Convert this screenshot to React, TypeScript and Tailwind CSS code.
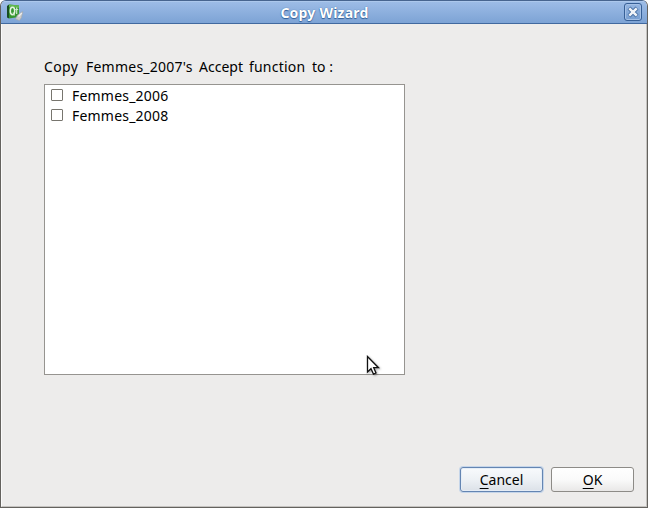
import React from 'react';

function AppIcon() {
  return (
    <svg width="18" height="18" viewBox="0 0 18 18" className="block">
      <path d="M1 2 3 .5V14.5L1 13.5Z" fill="#174d20" />
      <path d="M3 .5 13 1.5V13L3 14.5Z" fill="#35962f" />
      <path d="M3 .5 13 1.5V4L3 3Z" fill="#62b84e" />
      <ellipse cx="6.5" cy="7" rx="2.2" ry="3.7" fill="none" stroke="#e3f3df" strokeWidth="1.5" />
      <path d="M7 8.5 8.5 11.5M10.7 3.5V10M9.2 5.5H12.2" stroke="#d0ebca" strokeWidth="1.2" fill="none" />
      <path d="M16.8 7.5 11.5 11 9.5 15 13.5 16.5 15.5 13.5Z" fill="#c9caca" stroke="#a5a8aa" strokeWidth=".6" />
      <path d="M15.8 9 12.5 12.5" stroke="#eeeeee" strokeWidth="1.2" />
    </svg>
  );
}

function TitleBar() {
  return (
    <header className="flex h-[23px] shrink-0 items-start justify-between border-b border-[#41699f] bg-linear-to-b from-[#9ebde7] to-[#7da3d5] pr-[5px] pl-[5px] pt-[2px] shadow-[inset_0_1px_0_#acc8ec]">
      <div className="w-[19px] pt-px"><AppIcon /></div>
      <h1 className="mt-px whitespace-nowrap text-[14px] leading-[18px] font-bold tracking-[0.22px] text-white [text-shadow:0_0_1px_#315f98,0_1px_1px_#315f98]">Copy Wizard</h1>
      <button aria-label="Close" className="flex h-[18px] w-[18px] items-center justify-center rounded-[3px] border border-[#365f96] bg-linear-to-b from-[#94b5e1] to-[#789fd1] shadow-[inset_0_0_0_1px_#a5c1e6]">
        <svg width="12" height="12" viewBox="0 0 12 12">
          <path d="M2 2 10 10M10 2 2 10" stroke="#426b9f" strokeWidth="4.2" />
          <path d="M2.3 2.3 9.7 9.7M9.7 2.3 2.3 9.7" stroke="#f1f4f8" strokeWidth="2.5" />
        </svg>
      </button>
    </header>
  );
}

function CheckRow({ label }: { label: string }) {
  return (
    <label className="flex h-5 items-center">
      <span className="mb-[2px] h-3 w-3 rounded-[1px] border border-[#77756e] bg-white" />
      <span className="ml-[9px] text-[14px] leading-5 tracking-[0.2px]">{label}</span>
    </label>
  );
}

function Pointer() {
  return (
    <svg width="16" height="22" viewBox="0 0 16 22" className="absolute left-[321px] top-[270px] drop-shadow-[1px_1px_1px_#00000055]">
      <path d="M1.5 1.5V17L5 13.7 7.5 19.2 10 18 7.7 12.7H12.5Z" fill="white" stroke="#111" strokeWidth="1.3" />
    </svg>
  );
}

export default function App() {
  return (
    <div className="h-[508px] w-[648px] bg-white font-['Noto_Sans','Open_Sans',sans-serif] text-black">
      <div className="flex h-full flex-col overflow-hidden rounded-t-[6px] border border-t-[#47658f] border-r-[#64625e] border-b-[#64625e] border-l-[#64625e] bg-[#edeceb]">
        <TitleBar />
        <main className="flex flex-1 flex-col border-r border-b border-l border-r-[#c5c3c0] border-b-[#c5c3c0] border-l-[#fafafa] pl-[42px]">
          <p className="mt-[33px] flex h-5 text-[14px] leading-5 whitespace-pre">
            <span className="w-[42px] tracking-[0.35px]">Copy </span>
            <span className="w-[113px] tracking-[0.23px]">Femmes_2007's </span>
            <span className="w-[50px]">Accept </span>
            <span className="w-[63px] tracking-[0.2px]">function </span>
            <span>to :</span>
          </p>
          <section className="relative mt-[7px] h-[291px] w-[361px] border border-[#969490] bg-white px-1.5 pt-px">
            <CheckRow label="Femmes_2006" />
            <CheckRow label="Femmes_2008" />
            <Pointer />
          </section>
          <footer className="mt-[92px] mr-3 flex justify-end gap-[8px] text-[14px] leading-5">
            <button className="h-[25px] w-[83px] rounded-[3px] border border-[#6485b2] bg-linear-to-b from-[#f8fafc] via-[#edf1f5] to-[#dce1e8] pt-px shadow-[0_0_0_1px_#c5d5e9,inset_0_0_0_1px_#e5edf6]">
              <span className="underline underline-offset-[3px]">C</span>ancel
            </button>
            <button className="h-[25px] w-[83px] rounded-[3px] border border-[#8d8b87] bg-linear-to-b from-white via-[#fafafa] to-[#e9e8e7] pt-px">
              <span className="underline underline-offset-[3px]">O</span>K
            </button>
          </footer>
        </main>
      </div>
    </div>
  );
}
